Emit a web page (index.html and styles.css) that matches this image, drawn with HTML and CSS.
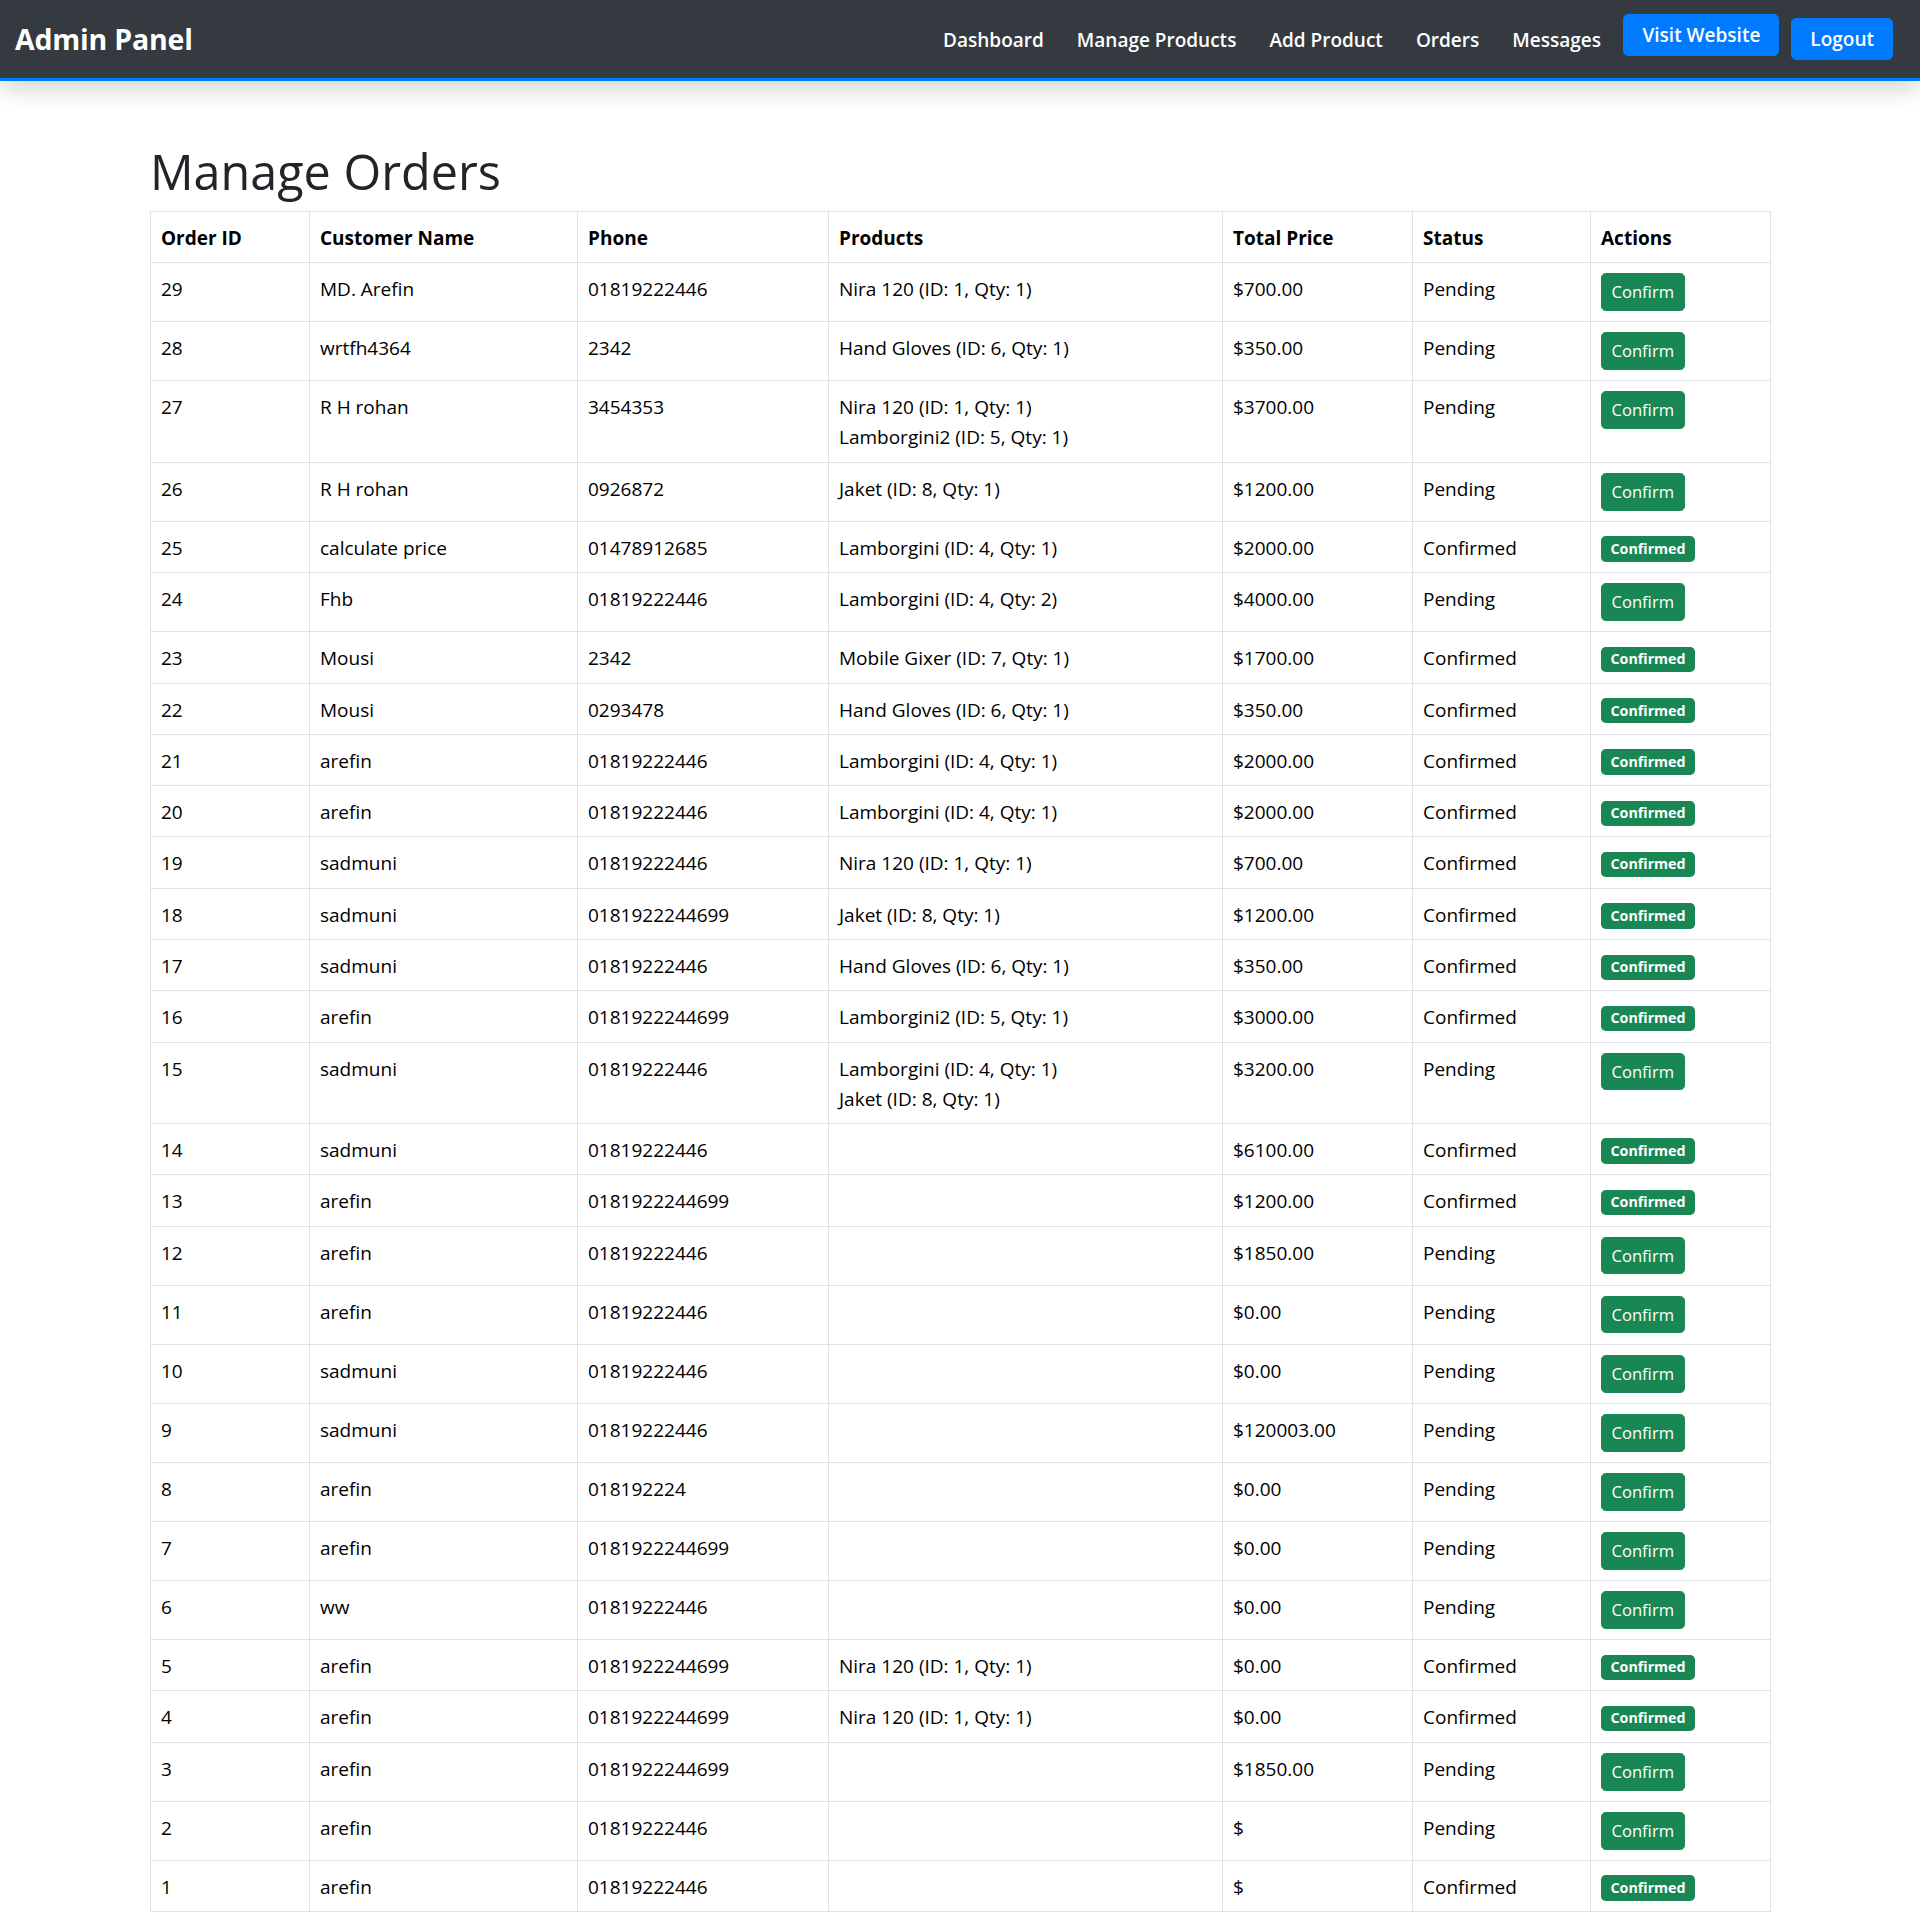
FILE: index.html
```html
<!DOCTYPE html>
<html lang="en">
<head>
<meta charset="utf-8">
<title>Admin Panel - Manage Orders</title>
<link rel="stylesheet" href="styles.css">
</head>
<body>
<nav class="navbar">
  <a class="brand" href="#">Admin Panel</a>
  <ul class="nav-links">
    <li><a class="nav-link" href="#">Dashboard</a></li>
    <li><a class="nav-link" href="#">Manage Products</a></li>
    <li><a class="nav-link" href="#">Add Product</a></li>
    <li><a class="nav-link" href="#">Orders</a></li>
    <li><a class="nav-link" href="#">Messages</a></li>
    <li><a class="nav-btn nav-btn-visit" href="#">Visit Website</a></li>
    <li><a class="nav-btn nav-btn-logout" href="#">Logout</a></li>
  </ul>
</nav>

<main class="container">
  <h1 class="page-title">Manage Orders</h1>
  <table class="orders">
    <colgroup>
      <col class="c-id"><col class="c-name"><col class="c-phone"><col class="c-products"><col class="c-price"><col class="c-status"><col class="c-actions">
    </colgroup>
    <thead>
      <tr><th>Order ID</th><th>Customer Name</th><th>Phone</th><th>Products</th><th>Total Price</th><th>Status</th><th>Actions</th></tr>
    </thead>
    <tbody>
      <tr><td>29</td><td>MD. Arefin</td><td>01819222446</td><td><div>Nira 120 (ID: 1, Qty: 1)</div></td><td>$700.00</td><td>Pending</td><td><button class="btn-confirm">Confirm</button></td></tr>
      <tr><td>28</td><td>wrtfh4364</td><td>2342</td><td><div>Hand Gloves (ID: 6, Qty: 1)</div></td><td>$350.00</td><td>Pending</td><td><button class="btn-confirm">Confirm</button></td></tr>
      <tr><td>27</td><td>R H rohan</td><td>3454353</td><td><div>Nira 120 (ID: 1, Qty: 1)</div><div>Lamborgini2 (ID: 5, Qty: 1)</div></td><td>$3700.00</td><td>Pending</td><td><button class="btn-confirm">Confirm</button></td></tr>
      <tr><td>26</td><td>R H rohan</td><td>0926872</td><td><div>Jaket (ID: 8, Qty: 1)</div></td><td>$1200.00</td><td>Pending</td><td><button class="btn-confirm">Confirm</button></td></tr>
      <tr><td>25</td><td>calculate price</td><td>01478912685</td><td><div>Lamborgini (ID: 4, Qty: 1)</div></td><td>$2000.00</td><td>Confirmed</td><td><span class="badge">Confirmed</span></td></tr>
      <tr><td>24</td><td>Fhb</td><td>01819222446</td><td><div>Lamborgini (ID: 4, Qty: 2)</div></td><td>$4000.00</td><td>Pending</td><td><button class="btn-confirm">Confirm</button></td></tr>
      <tr><td>23</td><td>Mousi</td><td>2342</td><td><div>Mobile Gixer (ID: 7, Qty: 1)</div></td><td>$1700.00</td><td>Confirmed</td><td><span class="badge">Confirmed</span></td></tr>
      <tr><td>22</td><td>Mousi</td><td>0293478</td><td><div>Hand Gloves (ID: 6, Qty: 1)</div></td><td>$350.00</td><td>Confirmed</td><td><span class="badge">Confirmed</span></td></tr>
      <tr><td>21</td><td>arefin</td><td>01819222446</td><td><div>Lamborgini (ID: 4, Qty: 1)</div></td><td>$2000.00</td><td>Confirmed</td><td><span class="badge">Confirmed</span></td></tr>
      <tr><td>20</td><td>arefin</td><td>01819222446</td><td><div>Lamborgini (ID: 4, Qty: 1)</div></td><td>$2000.00</td><td>Confirmed</td><td><span class="badge">Confirmed</span></td></tr>
      <tr><td>19</td><td>sadmuni</td><td>01819222446</td><td><div>Nira 120 (ID: 1, Qty: 1)</div></td><td>$700.00</td><td>Confirmed</td><td><span class="badge">Confirmed</span></td></tr>
      <tr><td>18</td><td>sadmuni</td><td>0181922244699</td><td><div>Jaket (ID: 8, Qty: 1)</div></td><td>$1200.00</td><td>Confirmed</td><td><span class="badge">Confirmed</span></td></tr>
      <tr><td>17</td><td>sadmuni</td><td>01819222446</td><td><div>Hand Gloves (ID: 6, Qty: 1)</div></td><td>$350.00</td><td>Confirmed</td><td><span class="badge">Confirmed</span></td></tr>
      <tr><td>16</td><td>arefin</td><td>0181922244699</td><td><div>Lamborgini2 (ID: 5, Qty: 1)</div></td><td>$3000.00</td><td>Confirmed</td><td><span class="badge">Confirmed</span></td></tr>
      <tr><td>15</td><td>sadmuni</td><td>01819222446</td><td><div>Lamborgini (ID: 4, Qty: 1)</div><div>Jaket (ID: 8, Qty: 1)</div></td><td>$3200.00</td><td>Pending</td><td><button class="btn-confirm">Confirm</button></td></tr>
      <tr><td>14</td><td>sadmuni</td><td>01819222446</td><td></td><td>$6100.00</td><td>Confirmed</td><td><span class="badge">Confirmed</span></td></tr>
      <tr><td>13</td><td>arefin</td><td>0181922244699</td><td></td><td>$1200.00</td><td>Confirmed</td><td><span class="badge">Confirmed</span></td></tr>
      <tr><td>12</td><td>arefin</td><td>01819222446</td><td></td><td>$1850.00</td><td>Pending</td><td><button class="btn-confirm">Confirm</button></td></tr>
      <tr><td>11</td><td>arefin</td><td>01819222446</td><td></td><td>$0.00</td><td>Pending</td><td><button class="btn-confirm">Confirm</button></td></tr>
      <tr><td>10</td><td>sadmuni</td><td>01819222446</td><td></td><td>$0.00</td><td>Pending</td><td><button class="btn-confirm">Confirm</button></td></tr>
      <tr><td>9</td><td>sadmuni</td><td>01819222446</td><td></td><td>$120003.00</td><td>Pending</td><td><button class="btn-confirm">Confirm</button></td></tr>
      <tr><td>8</td><td>arefin</td><td>018192224</td><td></td><td>$0.00</td><td>Pending</td><td><button class="btn-confirm">Confirm</button></td></tr>
      <tr><td>7</td><td>arefin</td><td>0181922244699</td><td></td><td>$0.00</td><td>Pending</td><td><button class="btn-confirm">Confirm</button></td></tr>
      <tr><td>6</td><td>ww</td><td>01819222446</td><td></td><td>$0.00</td><td>Pending</td><td><button class="btn-confirm">Confirm</button></td></tr>
      <tr><td>5</td><td>arefin</td><td>0181922244699</td><td><div>Nira 120 (ID: 1, Qty: 1)</div></td><td>$0.00</td><td>Confirmed</td><td><span class="badge">Confirmed</span></td></tr>
      <tr><td>4</td><td>arefin</td><td>0181922244699</td><td><div>Nira 120 (ID: 1, Qty: 1)</div></td><td>$0.00</td><td>Confirmed</td><td><span class="badge">Confirmed</span></td></tr>
      <tr><td>3</td><td>arefin</td><td>0181922244699</td><td></td><td>$1850.00</td><td>Pending</td><td><button class="btn-confirm">Confirm</button></td></tr>
      <tr><td>2</td><td>arefin</td><td>01819222446</td><td></td><td>$</td><td>Pending</td><td><button class="btn-confirm">Confirm</button></td></tr>
      <tr><td>1</td><td>arefin</td><td>01819222446</td><td></td><td>$</td><td>Confirmed</td><td><span class="badge">Confirmed</span></td></tr>
    </tbody>
  </table>
</main>
</body>
</html>
```

FILE: styles.css
```css
* { box-sizing: border-box; }

html, body {
  margin: 0;
  padding: 0;
  background: #fff;
}

body {
  font-family: "Open Sans", "Noto Sans", sans-serif;
  font-size: 19px;
  line-height: 30px;
  color: #212529;
}

a { text-decoration: none; }

/* ---------- Navbar ---------- */
.navbar {
  position: relative;
  z-index: 2;
  display: flex;
  align-items: center;
  justify-content: space-between;
  height: 81px;
  padding: 0 27px 0 15px;
  background: #343a40;
  border-bottom: 3px solid #007bff;
  box-shadow: 0 10px 20px rgba(0, 0, 0, 0.15);
}

.brand {
  color: #fff;
  font-size: 28.5px;
  font-weight: 700;
  line-height: 45px;
  letter-spacing: -0.2px;
}

.nav-links {
  display: flex;
  align-items: center;
  list-style: none;
  margin: 0;
  padding: 0;
}

.nav-link {
  display: block;
  padding: 2px 16.5px 0;
  color: #fff;
  font-size: 19px;
  font-weight: 600;
  line-height: 30px;
}

.nav-btn {
  display: block;
  height: 42px;
  padding: 0 18px;
  border: 1px solid #007bff;
  border-radius: 5px;
  background: #007bff;
  color: #fff;
  font-size: 19px;
  font-weight: 600;
  line-height: 40px;
}

.nav-btn-visit {
  margin: 0 0 8px 6px;
}

.nav-btn-logout {
  margin-left: 12px;
}

/* ---------- Content ---------- */
.container {
  width: 1620px;
  margin: 0 auto;
  padding-bottom: 20px;
}

.page-title {
  margin: 60px 0 10px;
  font-size: 48.5px;
  font-weight: 400;
  line-height: 60px;
  color: #212529;
}

.orders {
  width: 1620px;
  table-layout: fixed;
  border-collapse: collapse;
  color: #000;
}

.c-id { width: 159px; }
.c-name { width: 268px; }
.c-phone { width: 251px; }
.c-products { width: 394px; }
.c-price { width: 190px; }
.c-status { width: 178px; }
.c-actions { width: 180px; }

.orders th,
.orders td {
  border: 1px solid #dee2e6;
  padding: 11px 10px 9.3px;
  text-align: left;
  vertical-align: top;
  font-size: 19px;
  line-height: 30px;
}

.orders th {
  font-weight: 700;
}

.btn-confirm {
  display: inline-block;
  vertical-align: top;
  height: 37.8px;
  margin: -1px 0 1px;
  padding: 0 9.5px;
  border: 1px solid #198754;
  border-radius: 4.7px;
  background: #198754;
  color: #fff;
  font-family: "Open Sans", "Noto Sans", sans-serif;
  font-size: 16.6px;
  font-weight: 400;
  line-height: 35.8px;
  cursor: pointer;
}

.badge {
  display: inline-block;
  padding: 5.5px 9.5px;
  border-radius: 4.7px;
  background: #198754;
  color: #fff;
  font-size: 14.25px;
  font-weight: 700;
  line-height: 1;
  vertical-align: 1px;
}
```
